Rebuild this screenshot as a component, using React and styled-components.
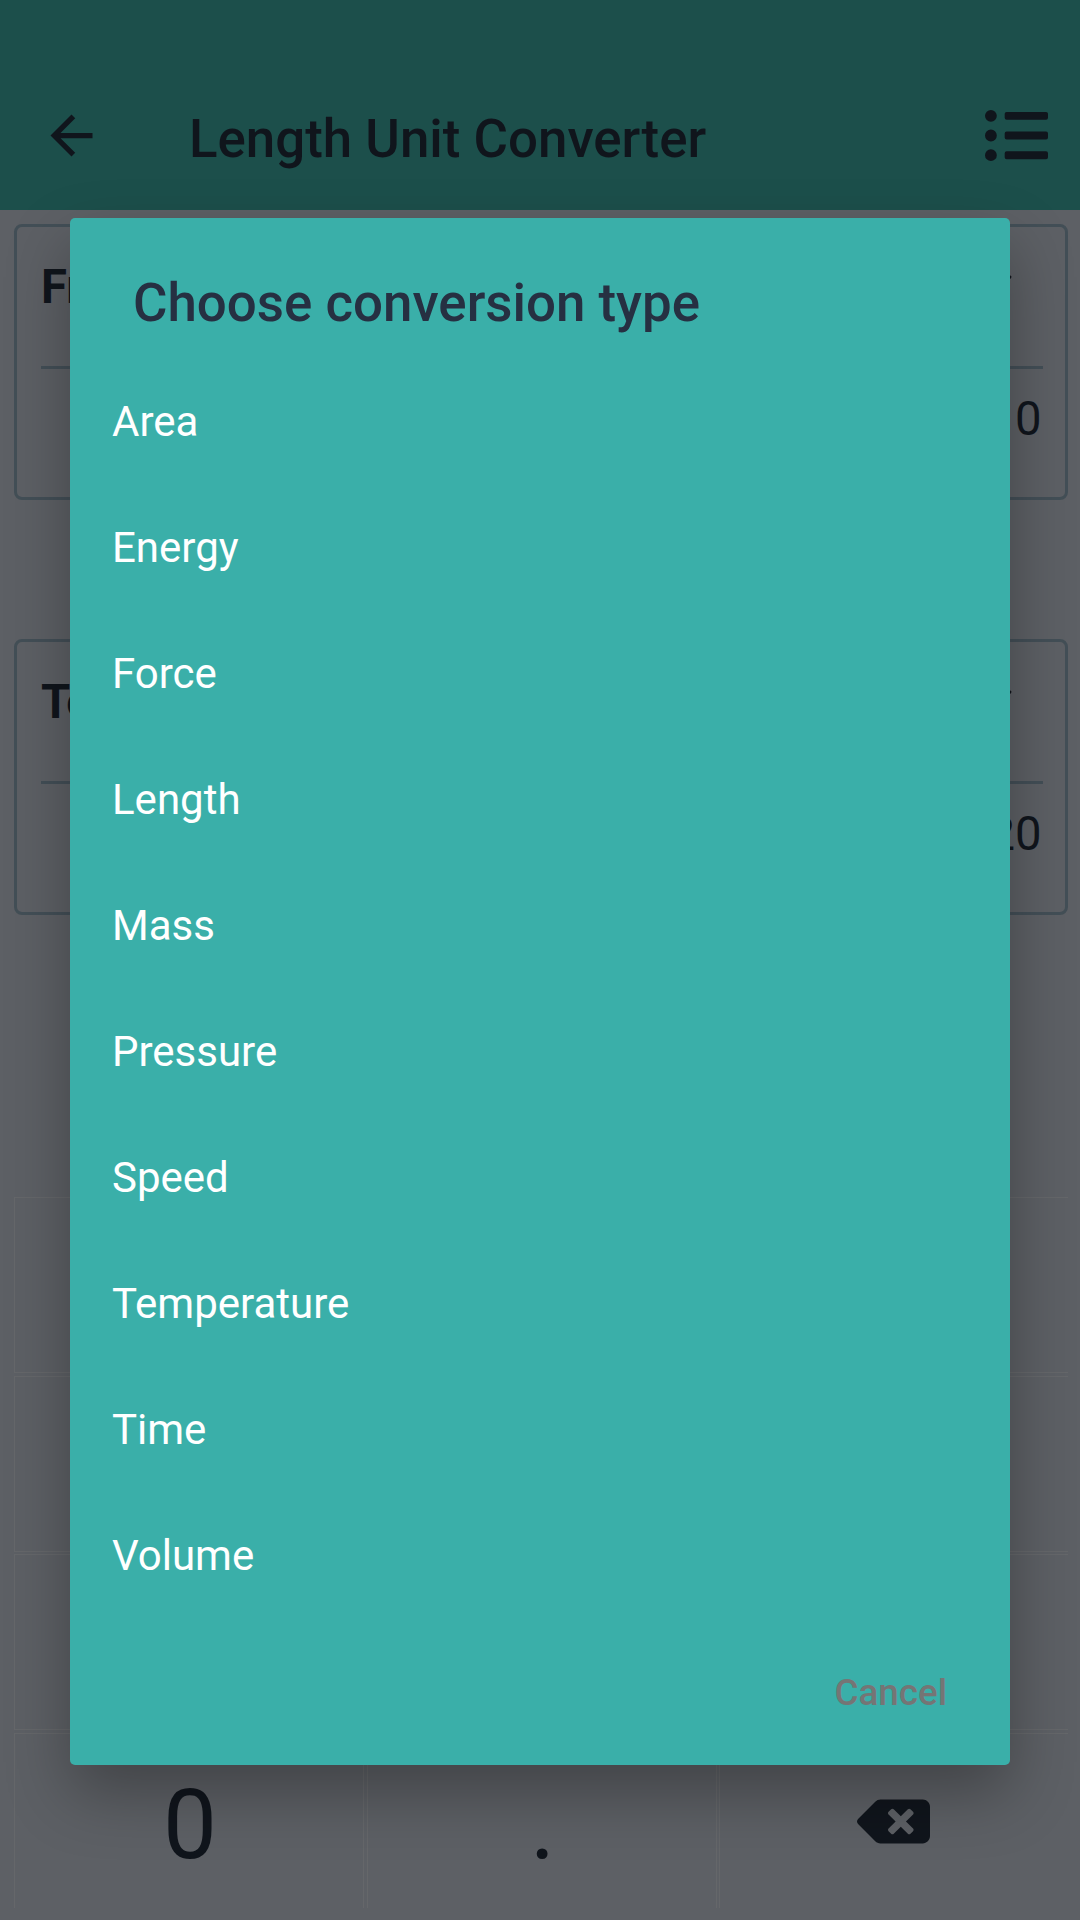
import React from "react";
import styled, { createGlobalStyle } from "styled-components";
import { FaListUl, FaBackspace, FaCaretDown } from "react-icons/fa";
import { MdArrowBack } from "react-icons/md";

const INK = "#10151c";

const Global = createGlobalStyle`
  *, *::before, *::after { box-sizing: border-box; }
  body { margin: 0; background: #5d6065; }
`;

const Screen = styled.div`
  position: relative;
  display: flex;
  flex-direction: column;
  width: 1080px;
  height: 1920px;
  overflow: hidden;
  background: #5d6065;
  color: ${INK};
  font-family: Roboto, sans-serif;
`;

const Header = styled.header`
  display: flex;
  align-items: center;
  height: 210px;
  padding: 61px 32px 0 40px;
  background: #1c4f4b;
`;

const HeaderTitle = styled.h1`
  flex: 1;
  margin: 6px 0 0 86px;
  font-size: 52.85px;
  font-weight: 500;
  line-height: 62px;
  white-space: nowrap;
`;

const IconButton = styled.button`
  display: flex;
  padding: 0;
  border: 0;
  background: none;
  color: inherit;
  font-size: ${(p) => p.$size}px;
`;

const Body = styled.main`
  flex: 1;
  display: flex;
  flex-direction: column;
  padding: 14px 12px 12px 14px;
`;

const Card = styled.section`
  display: flex;
  flex-direction: column;
  height: 276px;
  padding: 0 22px 0 24px;
  margin-bottom: 139px;
  border: 3px solid #434f57;
  border-radius: 8px;
`;

const UnitRow = styled.div`
  display: flex;
  justify-content: space-between;
  align-items: center;
  height: 142px;
  padding: 0 24px 20px 0;
  border-bottom: 3px solid #434f57;
`;

const UnitLabel = styled.span`
  font-size: 47.25px;
  font-weight: 700;
  line-height: 56px;
`;

const Caret = styled(FaCaretDown)`
  margin-bottom: 14px;
  font-size: 36px;
`;

const Value = styled.div`
  padding: 22px 1.5px 0 0;
  text-align: right;
  font-size: 47.25px;
  line-height: 56px;
`;

const Keypad = styled.div`
  display: grid;
  grid-template-columns: repeat(3, 350px);
  grid-template-rows: repeat(4, 176px);
  gap: 2.67px;
  width: 1054px;
  height: 711px;
  margin-top: 143px;
  overflow: hidden;
`;

const Key = styled.button`
  display: flex;
  align-items: center;
  justify-content: center;
  padding: ${(p) => (p.$icon ? "1px 2px 0 0" : "8px 0 0 2px")};
  border: 1px solid #65676a;
  background: none;
  color: ${INK};
  font-family: inherit;
  font-size: 96px;
  line-height: 112px;
`;

const Dialog = styled.div`
  position: absolute;
  left: 70px;
  top: 218px;
  display: flex;
  flex-direction: column;
  width: 940px;
  height: 1547px;
  border-radius: 5px;
  background: #3aafa9;
  box-shadow: 0 28px 64px rgba(0, 0, 0, 0.3);
`;

const DialogTitle = styled.h2`
  margin: 0;
  padding: 54px 63px 0;
  height: 140px;
  color: #263042;
  font-size: 52.85px;
  font-weight: 500;
  line-height: 62px;
`;

const Options = styled.ul`
  flex: 1;
  margin: 0;
  padding: 0;
  list-style: none;
`;

const Option = styled.li`
  display: flex;
  align-items: center;
  height: 126px;
  padding-left: 42px;
  color: #fff;
  font-size: 42px;
`;

const Actions = styled.div`
  display: flex;
  justify-content: flex-end;
  padding: 0 63px 50px;
`;

const Cancel = styled.button`
  padding: 0;
  border: 0;
  background: none;
  color: #757575;
  font-family: inherit;
  font-size: 36.75px;
  font-weight: 500;
  line-height: 44px;
`;

const types = ["Area", "Energy", "Force", "Length", "Mass", "Pressure", "Speed", "Temperature", "Time", "Volume"];

function UnitCard({ label, value }) {
  return (
    <Card>
      <UnitRow>
        <UnitLabel>{label}</UnitLabel>
        <Caret />
      </UnitRow>
      <Value>{value}</Value>
    </Card>
  );
}

export default function App() {
  return (
    <Screen>
      <Global />
      <Header>
        <IconButton $size={63}><MdArrowBack /></IconButton>
        <HeaderTitle>Length Unit Converter</HeaderTitle>
        <IconButton $size={63}><FaListUl /></IconButton>
      </Header>
      <Body>
        <UnitCard label="From" value="0" />
        <UnitCard label="To" value="20" />
        <Keypad>
          {Array.from({ length: 9 }, (_, i) => <Key key={i} />)}
          <Key>0</Key>
          <Key>.</Key>
          <Key $icon><FaBackspace size={73} /></Key>
        </Keypad>
      </Body>
      <Dialog role="dialog">
        <DialogTitle>Choose conversion type</DialogTitle>
        <Options>
          {types.map((t) => <Option key={t}>{t}</Option>)}
        </Options>
        <Actions><Cancel>Cancel</Cancel></Actions>
      </Dialog>
    </Screen>
  );
}
